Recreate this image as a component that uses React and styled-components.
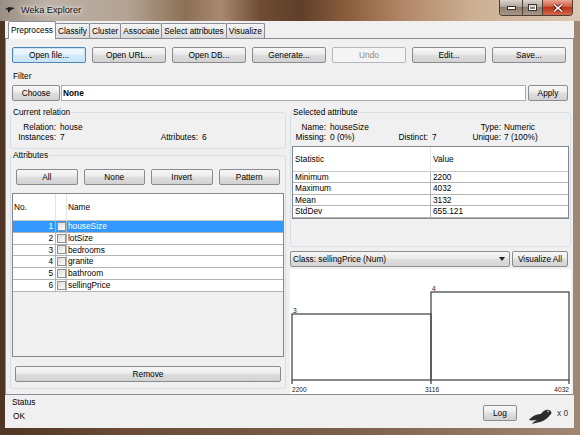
import React from "react";
import styled, { createGlobalStyle, css } from "styled-components";

const GlobalStyle = createGlobalStyle`
  html, body { margin: 0; padding: 0; }
  body {
    background: #6e5240;
    font-family: "Liberation Sans", Arial, sans-serif;
    font-size: 8.3px;
    color: #000;
  }
  * { box-sizing: border-box; }
`;

const Window = styled.div`
  width: 580px;
  height: 435px;
  display: flex;
  flex-direction: column;
  overflow: hidden;
  background: linear-gradient(90deg, #4f3524 0%, #6a4a34 20%, #7d604b 60%, #a08875 100%);
`;

const TitleBar = styled.div`
  height: 21px;
  flex: none;
  display: flex;
  align-items: flex-start;
  background: linear-gradient(90deg, #9b8f85 0%, #bdb1a6 8%, #b3a393 22%, #8d6f56 32%, #a88a70 38%,
    #6e4c33 45%, #5f3f29 52%, #8b5f3e 60%, #b3896a 70%, #cdb093 82%, #dac7b3 100%);
`;

const TitleIcon = styled.svg`
  margin: 6px 0 0 5px;
`;

const TitleText = styled.div`
  margin-left: 6px;
  line-height: 21px;
  font-size: 9.2px;
  color: #111;
  text-shadow: 0 0 6px #fff, 0 0 3px #fff;
`;

const Controls = styled.div`
  display: flex;
  margin: 0 7px 0 auto;
  height: 16px;
  border: 1px solid #4e3d31;
  border-top: none;
  border-radius: 0 0 4px 4px;
  overflow: hidden;
`;

const CtrlButton = styled.div`
  width: ${(p) => p.$w}px;
  display: flex;
  align-items: center;
  justify-content: center;
  border-left: 1px solid #4e3d31;
  background: linear-gradient(#dcd4cd, #b1a399 45%, #8f7d70 50%, #a89689);
  &:first-child { border-left: none; }
  ${(p) =>
    p.$close &&
    css`
      background: linear-gradient(#e9a796, #d0583f 45%, #bb3418 50%, #d4684b);
    `}
`;

const Client = styled.div`
  flex: 1;
  margin: 0 6px 7px 5px;
  background: #f0f0f0;
  display: flex;
  flex-direction: column;
  min-height: 0;
`;

const TabBar = styled.div`
  height: 17px;
  flex: none;
  display: flex;
  align-items: flex-end;
  padding-left: 3px;
`;

const Tab = styled.div`
  height: 15px;
  line-height: 14px;
  padding: 0 2px;
  margin-right: -1px;
  border: 1px solid #898c95;
  border-bottom: none;
  border-radius: 2px 2px 0 0;
  background: linear-gradient(#f4f4f4, #e8e8e8 50%, #dadada);
  white-space: nowrap;
  ${(p) =>
    p.$active &&
    css`
      position: relative;
      z-index: 1;
      height: 18px;
      line-height: 16px;
      margin-bottom: -1px;
      background: #fff;
    `}
`;

const Panel = styled.div`
  flex: 1;
  min-height: 0;
  display: flex;
  flex-direction: column;
  border: 1px solid #898c95;
  background: #f0f0f0;
  padding: 8px 2px 0 4px;
`;

const Button = styled.button`
  height: 16px;
  padding: 0;
  font: inherit;
  color: #000;
  border: 1px solid #8a8b8c;
  border-radius: 2px;
  background: linear-gradient(#f7f7f7, #ececec 45%, #dedede 50%, #d2d2d2);
  white-space: nowrap;
  ${(p) =>
    p.$focus &&
    css`
      border-color: #4e86b4;
      box-shadow: inset 0 0 0 1px #c9e5f6;
      background: linear-gradient(#f2f9fd, #e6f3fb 45%, #d5ebf8 50%, #c6e3f5);
    `}
  &:disabled {
    color: #8a8a8a;
    border-color: #b5b8ba;
    background: #f4f4f4;
  }
`;

const ButtonRow = styled.div`
  display: grid;
  grid-template-columns: repeat(${(p) => p.$n}, 1fr);
  gap: 6px;
  margin: ${(p) => p.$margin};
`;

const SectionLabel = styled.div`
  line-height: 10px;
  margin: ${(p) => p.$margin || "0"};
`;

const FilterRow = styled.div`
  display: flex;
  gap: 1px;
  margin: 4px 3px 0 2px;
  height: 16px;
`;

const FilterField = styled.div`
  flex: 1;
  margin-right: 1px;
  background: #fff;
  border: 1px solid #abadb3;
  font-weight: bold;
  line-height: 14px;
  padding-left: 1px;
`;

const Columns = styled.div`
  flex: 1;
  min-height: 0;
  margin-top: 6px;
  display: grid;
  grid-template-columns: 276px 1fr;
  gap: 4px;
`;

const Column = styled.div`
  display: flex;
  flex-direction: column;
  min-height: 0;
  padding-bottom: ${(p) => p.$pb || 0}px;
`;

const Group = styled.fieldset`
  margin: ${(p) => p.$margin || "0"};
  padding: 5px 1px ${(p) => p.$pb ?? 6}px;
  min-width: 0;
  border: 1px solid #d5dfe5;
  border-radius: 3px;
  display: flex;
  flex-direction: column;
  ${(p) => p.$h && css`height: ${p.$h}px; flex: none;`}
  ${(p) => p.$grow && css`flex: 1; min-height: 0;`}
`;

const Legend = styled.legend`
  padding: 0 1px;
  line-height: 10px;
`;

const InfoGrid = styled.div`
  display: grid;
  grid-template-columns: ${(p) => p.$cols};
  grid-auto-rows: 10px;
  line-height: 10px;
  white-space: nowrap;
`;

const InfoLabel = styled.span`
  text-align: right;
  padding-right: 3px;
`;

const InfoValue = styled.span`
  padding-left: 1px;
`;

const Table = styled.div`
  flex: 1;
  min-height: 0;
  margin: ${(p) => p.$margin || "0"};
  border: 1px solid #828790;
  background: #f0f0f0;
  display: flex;
  flex-direction: column;
`;

const Row = styled.div`
  display: grid;
  grid-template-columns: ${(p) => p.$cols};
  height: ${(p) => p.$h}px;
  line-height: ${(p) => p.$h - 1}px;
  background: #fff;
  ${(p) =>
    p.$selected &&
    css`
      background: #3399ff;
      color: #fff;
    `}
`;

const HeadCell = styled.div`
  padding-left: ${(p) => p.$pl ?? 1}px;
  border-right: 1px solid #e3e3e3;
  border-bottom: 1px solid #c8c8c8;
  &:last-child { border-right: none; }
`;

const Cell = styled.div`
  padding: 0 ${(p) => p.$pr ?? 0}px 0 ${(p) => p.$pl ?? 1}px;
  text-align: ${(p) => p.$align || "left"};
  border-right: 1px solid #b4b4b4;
  border-bottom: 1px solid #b4b4b4;
  white-space: nowrap;
  overflow: hidden;
  &:last-child { border-right: none; }
`;

const CheckCell = styled.div`
  display: flex;
  align-items: center;
  justify-content: center;
  border-right: 1px solid #b4b4b4;
  border-bottom: 1px solid #b4b4b4;
`;

const Checkbox = styled.span`
  width: 9px;
  height: 9px;
  border: 1px solid #8f8f8f;
  background: linear-gradient(135deg, #dcdcdc, #fbfbfb);
`;

const ClassRow = styled.div`
  display: flex;
  gap: 2px;
  margin: 4px 3px 0 0;
  height: 16px;
  flex: none;
`;

const Combo = styled.div`
  flex: 1;
  display: flex;
  align-items: center;
  justify-content: space-between;
  padding: 0 4px 0 2px;
  border: 1px solid #8e8f8f;
  border-radius: 2px;
  background: linear-gradient(#f5f5f5, #ebebeb 45%, #dedede 50%, #d5d5d5);
`;

const Histogram = styled.div`
  flex: 1;
  min-height: 0;
  margin-top: 2px;
  background: #fff;
  overflow: hidden;
`;

const StatusBar = styled.div`
  height: 33px;
  flex: none;
  display: flex;
  padding-left: 7px;
`;

const StatusInfo = styled.div`
  flex: 1;
  padding-top: 2px;
`;

const LogArea = styled.div`
  display: flex;
  align-items: flex-start;
  padding-top: 10px;
  margin-right: 6px;
`;

const LogButton = styled(Button)`
  width: 34px;
  height: 16px;
  text-align: center;
`;

const BirdSlot = styled.span`
  margin: 2px 0 0 11px;
`;

const TaskCount = styled.span`
  margin: 3px 0 0 4px;
  color: #333;
`;

const attributes = ["houseSize", "lotSize", "bedrooms", "granite", "bathroom", "sellingPrice"];
const stats = [
  ["Minimum", "2200"],
  ["Maximum", "4032"],
  ["Mean", "3132"],
  ["StdDev", "655.121"],
];

const WekaBird = () => (
  <svg width="25" height="18" viewBox="0 0 25 18">
    <path
      d="M1 13 C4 9 9 7 13 7 C15 4 18 2 21 3 C24 4 24 7 22 8 C20 11 16 14 12 15 C9 16 6 16 4 17 C5 15 7 14 9 13 C6 13 3 14 1 13 Z"
      fill="#2c2c2c"
    />
    <circle cx="20" cy="4.5" r="0.9" fill="#bbb" />
  </svg>
);

const Histo = () => (
  <svg width="280" height="125" viewBox="0 0 280 125">
    <g fill="none" stroke="#4a4a4a" strokeWidth="1.3">
      <rect x="2" y="45" width="139" height="66" />
      <rect x="141" y="23" width="138" height="88" />
      <path d="M2 111 V115 M141 111 V115 M279 111 V115" />
    </g>
    <g fontSize="6.6" fill="#222" fontFamily="Liberation Sans, Arial, sans-serif">
      <text x="3" y="43.5">3</text>
      <text x="142" y="21.5">4</text>
      <text x="2" y="123">2200</text>
      <text x="142" y="123" textAnchor="middle">3116</text>
      <text x="279" y="123" textAnchor="end">4032</text>
    </g>
  </svg>
);

export default function App() {
  return (
    <>
      <GlobalStyle />
      <Window>
        <TitleBar>
          <TitleIcon width="10" height="7" viewBox="0 0 10 7">
            <path d="M0 3 L4 1 L10 2 L6 4 L3 7 L3 4 Z" fill="#222" />
          </TitleIcon>
          <TitleText>Weka Explorer</TitleText>
          <Controls>
            <CtrlButton $w={22}>
              <svg width="9" height="4" viewBox="0 0 9 4">
                <rect x="0.5" y="0.5" width="8" height="3" fill="#fff" stroke="#333" />
              </svg>
            </CtrlButton>
            <CtrlButton $w={20}>
              <svg width="9" height="7" viewBox="0 0 9 7">
                <rect x="0.5" y="0.5" width="8" height="6" fill="none" stroke="#333" />
                <rect x="1.5" y="2" width="6" height="3.5" fill="none" stroke="#fff" />
              </svg>
            </CtrlButton>
            <CtrlButton $w={30} $close>
              <svg width="10" height="8" viewBox="0 0 10 8">
                <path d="M1 0.5 L9 7.5 M9 0.5 L1 7.5" stroke="#4a1408" strokeWidth="3" />
                <path d="M1 0.5 L9 7.5 M9 0.5 L1 7.5" stroke="#fff" strokeWidth="1.6" />
              </svg>
            </CtrlButton>
          </Controls>
        </TitleBar>

        <Client>
          <TabBar>
            <Tab $active>Preprocess</Tab>
            <Tab>Classify</Tab>
            <Tab>Cluster</Tab>
            <Tab>Associate</Tab>
            <Tab>Select attributes</Tab>
            <Tab>Visualize</Tab>
          </TabBar>

          <Panel>
            <ButtonRow $n={7} $margin="0 5px 0 2px">
              <Button $focus>Open file...</Button>
              <Button>Open URL...</Button>
              <Button>Open DB...</Button>
              <Button>Generate...</Button>
              <Button disabled>Undo</Button>
              <Button>Edit...</Button>
              <Button>Save...</Button>
            </ButtonRow>

            <SectionLabel $margin="8px 0 0 3px">Filter</SectionLabel>
            <FilterRow>
              <Button style={{ width: 48 }}>Choose</Button>
              <FilterField>None</FilterField>
              <Button style={{ width: 40 }}>Apply</Button>
            </FilterRow>

            <Columns>
              <Column $pb={5}>
                <Group $h={42}>
                  <Legend>Current relation</Legend>
                  <InfoGrid $cols="47px 94px 48px 1fr">
                    <InfoLabel>Relation:</InfoLabel>
                    <InfoValue>house</InfoValue>
                    <span />
                    <span />
                    <InfoLabel>Instances:</InfoLabel>
                    <InfoValue>7</InfoValue>
                    <InfoLabel>Attributes:</InfoLabel>
                    <InfoValue>6</InfoValue>
                  </InfoGrid>
                </Group>

                <Group $grow $margin="1px 0 0">
                  <Legend>Attributes</Legend>
                  <ButtonRow $n={4} $margin="4px 4px 0">
                    <Button>All</Button>
                    <Button>None</Button>
                    <Button>Invert</Button>
                    <Button>Pattern</Button>
                  </ButtonRow>
                  <Table $margin="8px 0 0">
                    <Row $cols="43px 11px 1fr" $h={27}>
                      <HeadCell>No.</HeadCell>
                      <HeadCell />
                      <HeadCell>Name</HeadCell>
                    </Row>
                    {attributes.map((name, i) => (
                      <Row key={name} $cols="43px 11px 1fr" $h={11.8} $selected={i === 0}>
                        <Cell $align="right" $pr={2}>
                          {i + 1}
                        </Cell>
                        <CheckCell>
                          <Checkbox />
                        </CheckCell>
                        <Cell>{name}</Cell>
                      </Row>
                    ))}
                  </Table>
                  <ButtonRow $n={1} $margin="9px 3px 0">
                    <Button>Remove</Button>
                  </ButtonRow>
                </Group>
              </Column>

              <Column>
                <Group $h={140} $pb={1}>
                  <Legend>Selected attribute</Legend>
                  <InfoGrid $cols="37px 64px 38px 35px 38px 1fr">
                    <InfoLabel>Name:</InfoLabel>
                    <InfoValue>houseSize</InfoValue>
                    <span />
                    <span />
                    <InfoLabel>Type:</InfoLabel>
                    <span>Numeric</span>
                    <InfoLabel>Missing:</InfoLabel>
                    <InfoValue>0 (0%)</InfoValue>
                    <InfoLabel>Distinct:</InfoLabel>
                    <InfoValue>7</InfoValue>
                    <InfoLabel>Unique:</InfoLabel>
                    <span>7 (100%)</span>
                  </InfoGrid>
                  <Table $margin="4px 0 0">
                    <Row $cols="138px 1fr" $h={25}>
                      <HeadCell $pl={2}>Statistic</HeadCell>
                      <HeadCell $pl={2}>Value</HeadCell>
                    </Row>
                    {stats.map(([k, v]) => (
                      <Row key={k} $cols="138px 1fr" $h={11.4}>
                        <Cell $pl={2}>{k}</Cell>
                        <Cell $pl={2}>{v}</Cell>
                      </Row>
                    ))}
                  </Table>
                </Group>

                <ClassRow>
                  <Combo>
                    <span>Class: sellingPrice (Num)</span>
                    <svg width="6" height="4" viewBox="0 0 6 4">
                      <path d="M0 0 H6 L3 4 Z" fill="#222" />
                    </svg>
                  </Combo>
                  <Button style={{ width: 56 }}>Visualize All</Button>
                </ClassRow>

                <Histogram>
                  <Histo />
                </Histogram>
              </Column>
            </Columns>
          </Panel>

          <StatusBar>
            <StatusInfo>
              <SectionLabel>Status</SectionLabel>
              <SectionLabel $margin="4px 0 0 1px">OK</SectionLabel>
            </StatusInfo>
            <LogArea>
              <LogButton>Log</LogButton>
              <BirdSlot>
                <WekaBird />
              </BirdSlot>
              <TaskCount>x 0</TaskCount>
            </LogArea>
          </StatusBar>
        </Client>
      </Window>
    </>
  );
}
